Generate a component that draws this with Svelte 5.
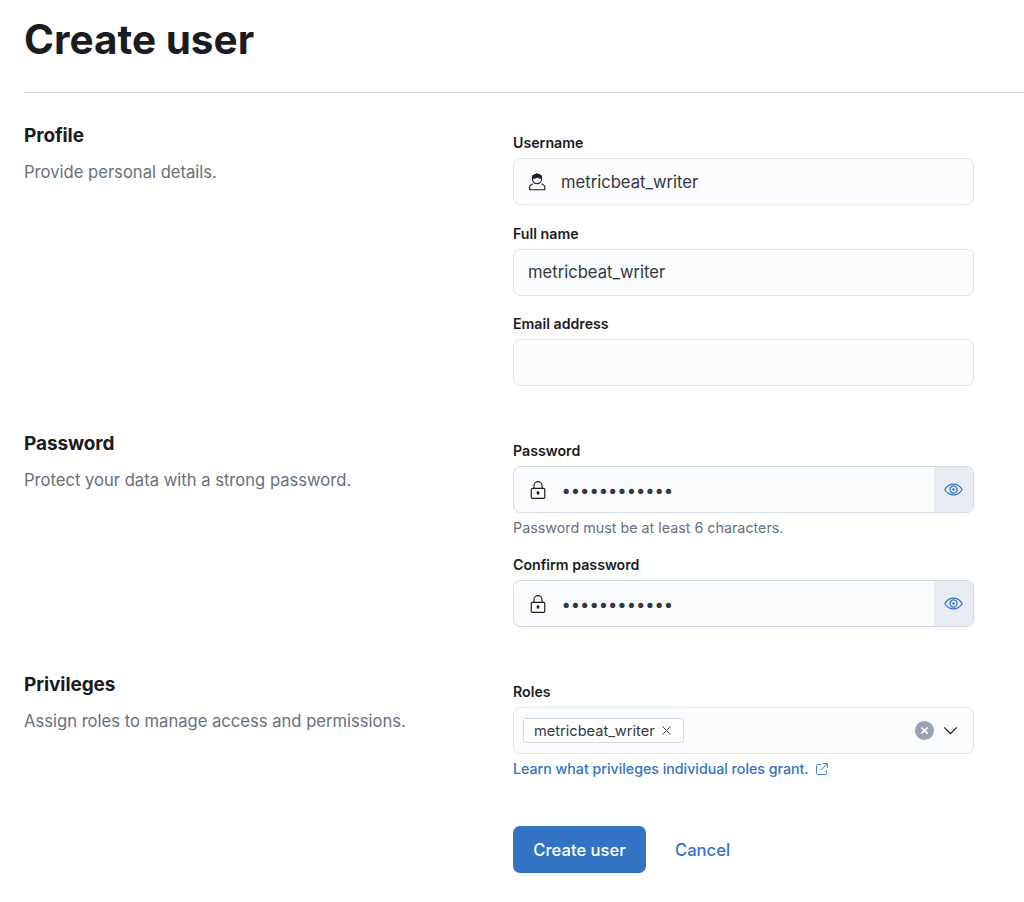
<script lang="ts">
	let username = 'metricbeat_writer'
	let fullName = 'metricbeat_writer'
	let email = ''
	let password = 'secret-passw'
	let confirm = 'secret-passw'
</script>

<div class="page">
	<h1>Create user</h1>
	<hr />

	<section class="profile">
		<div class="intro">
			<h2>Profile</h2>
			<p>Provide personal details.</p>
		</div>
		<div class="fields">
			<div class="row">
				<label for="username">Username</label>
				<div class="control">
					<svg class="icon" viewBox="0 0 16 16" fill="none" stroke="#1a1c21" stroke-width="1">
						<path d="M3.9 5.2C3.9 2.7 5.7.9 8 .9s4.1 1.8 4.1 4.3-1.8 4.4-4.1 4.4-4.1-1.9-4.1-4.4z" />
						<path d="M4 4.6C5.6 4.7 7.4 4.3 8.4 3.4c.8.8 2 1.2 3.6 1.2L11.6 2.4 8 1 4.4 2.4z" fill="#1a1c21" />
						<path d="M4.4 9.6 2.2 11c-.4.3-.7.7-.7 1.2v2.7h13.4v-2.7c0-.5-.3-.9-.7-1.2l-2.2-1.4" />
					</svg>
					<input id="username" bind:value={username} />
				</div>
			</div>
			<div class="row">
				<label for="fullname">Full name</label>
				<div class="control">
					<input id="fullname" bind:value={fullName} />
				</div>
			</div>
			<div class="row">
				<label for="email">Email address</label>
				<div class="control">
					<input id="email" bind:value={email} />
				</div>
			</div>
		</div>
	</section>

	<section class="password">
		<div class="intro">
			<h2>Password</h2>
			<p>Protect your data with a strong password.</p>
		</div>
		<div class="fields">
			<div class="row">
				<label for="password">Password</label>
				<div class="control pw">
					<svg class="icon" viewBox="0 0 16 16" fill="none" stroke="#1a1c21" stroke-width="1.05">
						<rect x="2.9" y="6.5" width="12" height="8.9" rx="1" />
						<path d="M5.3 6.5V4.2C5.3 2.2 6.9.6 8.9.6s3.6 1.6 3.6 3.6v2.3" />
						<circle cx="8.9" cy="10.4" r="1.3" fill="#1a1c21" stroke="none" />
						<path d="M8.9 10.4v2" />
					</svg>
					<input id="password" type="password" bind:value={password} />
					<span class="reveal">
						<svg viewBox="0 0 16 16" fill="none" stroke="#3273c4" stroke-width="1.05">
							<path d="M.7 8C2.4 5.1 5 3.4 8 3.4s5.6 1.7 7.3 4.6c-1.7 2.9-4.3 4.6-7.3 4.6S2.4 10.9.7 8z" />
							<circle cx="8" cy="8" r="3" />
							<circle cx="8" cy="8" r="1" fill="#3273c4" stroke="none" />
						</svg>
					</span>
				</div>
				<div class="help">Password must be at least 6 characters.</div>
			</div>
			<div class="row">
				<label for="confirm">Confirm password</label>
				<div class="control pw">
					<svg class="icon" viewBox="0 0 16 16" fill="none" stroke="#1a1c21" stroke-width="1.05">
						<rect x="2.9" y="6.5" width="12" height="8.9" rx="1" />
						<path d="M5.3 6.5V4.2C5.3 2.2 6.9.6 8.9.6s3.6 1.6 3.6 3.6v2.3" />
						<circle cx="8.9" cy="10.4" r="1.3" fill="#1a1c21" stroke="none" />
						<path d="M8.9 10.4v2" />
					</svg>
					<input id="confirm" type="password" bind:value={confirm} />
					<span class="reveal">
						<svg viewBox="0 0 16 16" fill="none" stroke="#3273c4" stroke-width="1.05">
							<path d="M.7 8C2.4 5.1 5 3.4 8 3.4s5.6 1.7 7.3 4.6c-1.7 2.9-4.3 4.6-7.3 4.6S2.4 10.9.7 8z" />
							<circle cx="8" cy="8" r="3" />
							<circle cx="8" cy="8" r="1" fill="#3273c4" stroke="none" />
						</svg>
					</span>
				</div>
			</div>
		</div>
	</section>

	<section class="privileges">
		<div class="intro">
			<h2>Privileges</h2>
			<p>Assign roles to manage access and permissions.</p>
		</div>
		<div class="fields">
			<div class="row">
				<span class="label">Roles</span>
				<div class="control combo">
					<span class="chip">
						metricbeat_writer
						<svg viewBox="0 0 12 12" fill="none" stroke="#343741" stroke-width="1">
							<path d="M1.5 1.5l9 9M10.5 1.5l-9 9" />
						</svg>
					</span>
					<span class="clear">
						<svg viewBox="0 0 10 10" fill="none" stroke="#fff" stroke-width="1.7">
							<path d="M1.5 1.5l7 7M8.5 1.5l-7 7" />
						</svg>
					</span>
					<svg class="chevron" viewBox="0 0 16 10" fill="none" stroke="#1a1c21" stroke-width="1.4">
						<path d="M1 1.5l7 7 7-7" />
					</svg>
				</div>
				<a class="learn" href="#roles">
					Learn what privileges individual roles grant.
					<svg viewBox="0 0 12 12" fill="none" stroke="#3273c4" stroke-width="0.9">
						<path d="M5 1.5H1.5a1 1 0 0 0-1 1v8a1 1 0 0 0 1 1h8a1 1 0 0 0 1-1V7" />
						<path d="M7 .6h4.4V5M11.2.8 5.2 6.8" />
					</svg>
				</a>
			</div>
			<div class="actions">
				<button>Create user</button>
				<a class="cancel" href="#cancel">Cancel</a>
			</div>
		</div>
	</section>
</div>

<style>
	:global(body) {
		background: #fff;
		font-family: Inter, 'Noto Sans', sans-serif;
		color: #1a1c21;
	}
	.page {
		padding: 15px 0 0 24px;
		box-sizing: border-box;
		height: 902px;
		overflow: hidden;
	}
	h1 {
		margin: 0;
		font-size: 40.5px;
		line-height: 50px;
		font-weight: 700;
	}
	hr {
		margin: 27px 0 0;
		border: 0;
		height: 1px;
		background: #d9dcea;
	}
	section {
		display: flex;
	}
	.profile {
		margin-top: 30px;
	}
	.password {
		margin-top: 45px;
	}
	.privileges {
		margin-top: 45px;
	}
	.intro {
		width: 489px;
		flex: none;
	}
	h2 {
		margin: 0;
		font-size: 19px;
		line-height: 25px;
		font-weight: 700;
		letter-spacing: -0.1px;
	}
	p {
		margin: 13px 0 0;
		font-size: 16.6px;
		line-height: 22px;
		color: #69707d;
	}
	.fields {
		width: 461px;
		padding-top: 10px;
	}
	.row + .row {
		margin-top: 18.5px;
	}
	label,
	.label {
		display: block;
		font-size: 14.2px;
		line-height: 19px;
		font-weight: 600;
		margin-bottom: 6px;
	}
	.control {
		display: flex;
		align-items: center;
		height: 47px;
		box-sizing: border-box;
		background: #fbfcfd;
		border: 1px solid #e2e5ef;
		border-radius: 7px;
		padding-left: 14px;
		overflow: hidden;
	}
	.icon {
		width: 18px;
		height: 18px;
		flex: none;
		margin-right: 15px;
	}
	input {
		flex: 1;
		min-width: 0;
		border: 0;
		outline: 0;
		padding: 0;
		background: transparent;
		font: 400 16.6px Inter, 'Noto Sans', sans-serif;
		color: #343741;
	}
	input[type='password'] {
		font-weight: 600;
		letter-spacing: 0.95px;
		margin-left: 1px;
	}
	.pw {
		border-color: #d3dae6;
	}
	.reveal {
		flex: none;
		align-self: stretch;
		width: 39px;
		display: flex;
		align-items: center;
		justify-content: center;
		background: #e9edf3;
	}
	.reveal svg {
		width: 19px;
		height: 19px;
	}
	.help {
		margin-top: 6px;
		font-size: 14.3px;
		line-height: 17.5px;
		color: #69707d;
	}
	.combo {
		padding-left: 9px;
	}
	.chip {
		display: flex;
		align-items: center;
		gap: 6px;
		height: 25px;
		box-sizing: border-box;
		padding: 0 11px 0 10px;
		font-size: 14.6px;
		color: #343741;
		background: #fff;
		border: 1px solid #d3dae6;
		border-radius: 3px;
	}
	.chip svg {
		width: 11px;
		height: 11px;
	}
	.clear {
		margin-left: auto;
		width: 19px;
		height: 19px;
		border-radius: 50%;
		background: #98a2b3;
		display: flex;
		align-items: center;
		justify-content: center;
	}
	.clear svg {
		width: 9px;
		height: 9px;
	}
	.chevron {
		width: 15px;
		height: 9px;
		margin: 0 15px 0 9px;
	}
	.learn {
		display: flex;
		align-items: center;
		gap: 7px;
		margin-top: 5px;
		font-size: 14.2px;
		line-height: 19px;
		font-weight: 500;
		color: #3273c4;
		text-decoration: none;
	}
	.learn svg {
		width: 12px;
		height: 12px;
	}
	.actions {
		display: flex;
		align-items: center;
		margin-top: 48px;
	}
	button {
		width: 133px;
		height: 47px;
		border: 0;
		border-radius: 7px;
		background: #3273c4;
		color: #fff;
		font: 500 16.6px Inter, 'Noto Sans', sans-serif;
	}
	.cancel {
		margin-left: 29px;
		font-size: 16.6px;
		font-weight: 500;
		color: #3273c4;
		text-decoration: none;
	}
</style>
